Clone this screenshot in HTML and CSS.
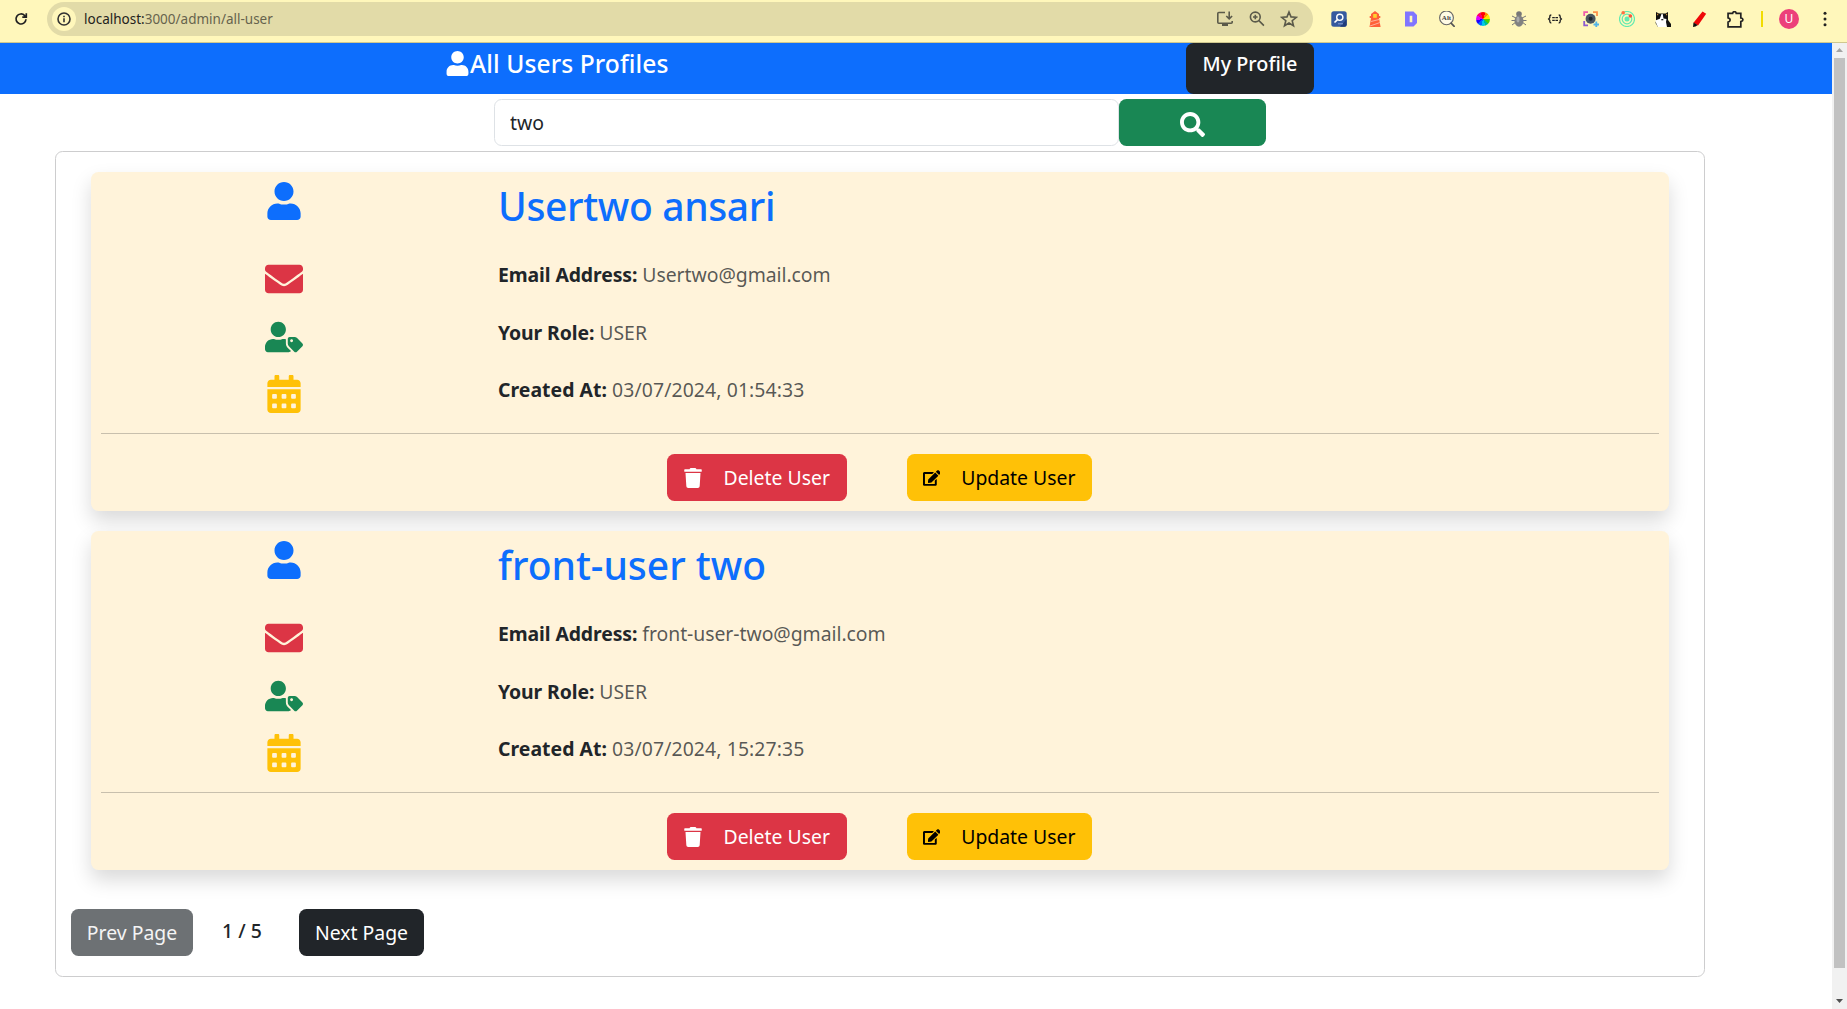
FILE: index.html
```
<!DOCTYPE html>
<html lang="en">
<head>
<meta charset="utf-8">
<title>All Users Profiles</title>
<link rel="stylesheet" href="styles.css">
</head>
<body>
<svg class="defs" width="0" height="0">
  <symbol id="user" viewBox="0 0 448 512"><path d="M224 256c70.7 0 128-57.3 128-128S294.7 0 224 0 96 57.3 96 128s57.3 128 128 128zm89.6 32h-16.7c-22.2 10.2-46.9 16-72.9 16s-50.6-5.8-72.9-16h-16.7C60.2 288 0 348.2 0 422.4V464c0 26.5 21.5 48 48 48h352c26.5 0 48-21.5 48-48v-41.6c0-74.2-60.2-134.4-134.4-134.4z"/></symbol>
  <symbol id="envelope" viewBox="0 0 512 512"><path d="M502.3 190.8c3.9-3.1 9.7-.2 9.7 4.7V400c0 26.5-21.5 48-48 48H48c-26.5 0-48-21.5-48-48V195.6c0-5 5.7-7.8 9.7-4.7 22.4 17.4 52.1 39.5 154.1 113.6 21.1 15.4 56.7 47.8 92.2 47.6 35.7.3 72-32.8 92.3-47.6 102-74.1 131.6-96.3 154-113.7zM256 320c23.2.4 56.6-29.2 73.4-41.4 132.7-96.3 142.8-104.7 173.4-128.7 5.8-4.5 9.2-11.5 9.2-18.9v-19c0-26.5-21.5-48-48-48H48c-26.5 0-48 21.5-48 48v19c0 7.4 3.4 14.3 9.2 18.9 30.6 23.9 40.7 32.4 173.4 128.7 16.8 12.2 50.2 41.8 73.4 41.4z"/></symbol>
  <symbol id="tag" viewBox="0 0 640 512"><path d="M630.6 364.9l-90.3-90.2c-12-12-28.3-18.7-45.3-18.7h-79.3c-17.7 0-32 14.3-32 32v79.2c0 17 6.7 33.2 18.7 45.2l90.3 90.2c12.5 12.5 32.8 12.5 45.3 0l92.5-92.5c12.6-12.5 12.6-32.7.1-45.2zm-182.8-21c-13.3 0-24-10.7-24-24s10.7-24 24-24 24 10.7 24 24c0 13.2-10.7 24-24 24zm-223.8-88c70.7 0 128-57.3 128-128C352 57.3 294.7 0 224 0S96 57.3 96 128c0 70.6 57.3 127.9 128 127.9zm127.8 111.2V294c-12.2-3.6-24.9-6.2-38.2-6.2h-16.7c-22.2 10.2-46.9 16-72.9 16s-50.6-5.8-72.9-16h-16.7C60.2 287.9 0 348.1 0 422.2V464c0 26.5 21.5 48 48 48h351.9c15.5 0 29.1-7.5 37.9-18.9l-57.4-58.1c-18.1-18.1-28.6-42.2-28.6-67.9z"/></symbol>
  <symbol id="calendar" viewBox="0 0 448 512"><path fill-rule="evenodd" d="M400 64h-48V16c0-8.8-7.2-16-16-16h-32c-8.8 0-16 7.2-16 16v48H160V16c0-8.8-7.2-16-16-16h-32c-8.8 0-16 7.2-16 16v48H48C21.5 64 0 85.5 0 112v48h448v-48c0-26.5-21.5-48-48-48zM0 464c0 26.5 21.5 48 48 48h352c26.5 0 48-21.5 48-48V192H0zM76 256h40q12 0 12 12v40q0 12-12 12H76q-12 0-12-12v-40q0-12 12-12zm128 0h40q12 0 12 12v40q0 12-12 12h-40q-12 0-12-12v-40q0-12 12-12zm128 0h40q12 0 12 12v40q0 12-12 12h-40q-12 0-12-12v-40q0-12 12-12zM76 384h40q12 0 12 12v40q0 12-12 12H76q-12 0-12-12v-40q0-12 12-12zm128 0h40q12 0 12 12v40q0 12-12 12h-40q-12 0-12-12v-40q0-12 12-12zm128 0h40q12 0 12 12v40q0 12-12 12h-40q-12 0-12-12v-40q0-12 12-12z"/></symbol>
  <symbol id="trash" viewBox="0 0 448 512"><path d="M432 32H312l-9.4-18.7A24 24 0 0 0 281.1 0H166.8a23.72 23.72 0 0 0-21.4 13.3L136 32H16A16 16 0 0 0 0 48v32a16 16 0 0 0 16 16h416a16 16 0 0 0 16-16V48a16 16 0 0 0-16-16zM53.2 467a48 48 0 0 0 47.9 45h245.8a48 48 0 0 0 47.9-45L416 128H32z"/></symbol>
  <symbol id="edit" viewBox="0 0 576 512"><path d="M402.6 83.2l90.2 90.2c3.8 3.8 3.8 10 0 13.8L274.4 405.6l-92.8 10.3c-12.4 1.4-22.9-9.1-21.5-21.5l10.3-92.8L388.8 83.2c3.8-3.8 10-3.8 13.8 0zm162-22.9l-48.8-48.8c-15.2-15.2-39.9-15.2-55.2 0l-35.4 35.4c-3.8 3.8-3.8 10 0 13.8l90.2 90.2c3.8 3.8 10 3.8 13.8 0l35.4-35.4c15.2-15.3 15.2-40 0-55.2zM384 346.2V448H64V128h229.8c3.2 0 6.2-1.3 8.5-3.5l40-40c7.6-7.6 2.1-20.5-8.5-20.5H48C21.5 64 0 85.5 0 112v352c0 26.5 21.5 48 48 48h352c26.5 0 48-21.5 48-48V306.2c0-10.7-12.9-16-20.5-8.5l-40 40c-2.2 2.3-3.5 5.3-3.5 8.5z"/></symbol>
  <symbol id="search" viewBox="0 0 512 512"><path d="M505 442.7L405.3 343c-4.5-4.5-10.6-7-17-7H372c27.6-35.3 44-79.7 44-128C416 93.1 322.9 0 208 0S0 93.1 0 208s93.1 208 208 208c48.3 0 92.7-16.4 128-44v16.3c0 6.4 2.5 12.5 7 17l99.7 99.7c9.4 9.4 24.6 9.4 33.9 0l28.3-28.3c9.4-9.4 9.4-24.6.1-34zM208 336c-70.7 0-128-57.2-128-128 0-70.7 57.2-128 128-128 70.7 0 128 57.2 128 128 0 70.7-57.2 128-128 128z"/></symbol>
</svg>

<div class="toolbar">
  <svg class="reload" viewBox="0 0 16 16"><path d="M13 8.300A5 5 0 1 1 11.700 4.600L13.300 6.200M13.300 2.200v4h-4" fill="none" stroke="#222" stroke-width="1.700"/></svg>
  <div class="address">
    <span class="info"><svg viewBox="0 0 16 16"><circle cx="8" cy="8" r="6" fill="none" stroke="#333" stroke-width="1.600"/><path d="M7.200 7.200h1.600v4H7.200zM7.200 4.700h1.600v1.600H7.200z" fill="#333"/></svg></span>
    <span class="url">localhost:<span class="path">3000/admin/all-user</span></span>
    <span class="address-icons">
      <svg viewBox="0 0 18 18"><path d="M9 2.500H2.800q-1 0-1 1v8.700q0 1 1 1h12.400q1 0 1-1V11M13.200 1.500v7M10.300 6l2.900 2.900L16.100 6" fill="none" stroke="#5b5a4a" stroke-width="1.600"/><path d="M6 13h6v3H6z" fill="#5b5a4a"/></svg>
      <svg viewBox="0 0 18 18"><circle cx="7.300" cy="7" r="4.900" fill="none" stroke="#5b5a4a" stroke-width="1.600"/><path d="M10.900 10.600l5 5M7.300 4.700v4.600M5 7h4.600" fill="none" stroke="#5b5a4a" stroke-width="1.600"/></svg>
      <svg viewBox="0 0 18 18"><path d="M9 2l2 4.900 5.300.4-4.100 3.400 1.300 5.100L9 13l-4.500 2.800 1.300-5.100L1.700 7.300 7 6.900z" fill="none" stroke="#5b5a4a" stroke-width="1.600"/></svg>
    </span>
  </div>
  <div class="extensions">
    <svg viewBox="0 0 16 16"><rect x=".3" y=".3" width="15.400" height="15.400" rx="2.500" fill="#35599f"/><path d="M9 15.700h4.500q2.200 0 2.200-2.200V8z" fill="#203c7a"/><circle cx="8.800" cy="6.300" r="3.100" fill="none" stroke="#fff" stroke-width="1.400"/><path d="M6.500 8.700L3.500 11.500" stroke="#fff" stroke-width="1.700"/><path d="M7 12.800h5" stroke="#9fb3df" stroke-width=".8"/></svg>
    <svg viewBox="0 0 16 16"><path d="M8 0l4 3v2h1.300v2H12l1.600 9H2.500L4 7H2.700V5H4V3z" fill="#ff6038"/><rect x="6.200" y="3" width="3.600" height="3.800" fill="#ffd22e"/><path d="M4 10.500L12 8.500M3 15l10-3.500" stroke="#ffb09b" stroke-width="1"/></svg>
    <svg viewBox="0 0 16 16"><path fill-rule="evenodd" d="M2 .5h8.500L14 4v8l-3.500 3.500H2zM6.700 4.700v6.600h2.600V4.700z" fill="#8075ff"/></svg>
    <svg viewBox="0 0 16 16"><circle cx="7.500" cy="6.800" r="6.900" fill="#fffbe5" stroke="#666" stroke-width="1.100"/><path d="M11.600 11.600l4.100 4.300" stroke="#555" stroke-width="1.700"/><text x="7.500" y="8.900" text-anchor="middle" class="alt-text">Alt</text></svg>
    <span class="wheel"></span>
    <svg viewBox="0 0 16 16"><path d="M1 5l4 2M15 5l-4 2M.5 9.500H15.500M1 14l4-3M15 14l-4-3" stroke="#777" fill="none"/><circle cx="8" cy="3" r="2.800" fill="#777"/><ellipse cx="8" cy="10" rx="4.500" ry="5.800" fill="#818181"/><ellipse cx="7" cy="8.500" rx="1.500" ry="3" fill="#aaa"/></svg>
    <svg viewBox="0 0 16 16"><path d="M4.300 4q-1.500 0-1.500 1.400v1.400L1.600 8l1.200 1.200v1.400q0 1.400 1.500 1.400M11.700 4q1.500 0 1.500 1.400v1.400L14.400 8l-1.200 1.200v1.400q0 1.400-1.500 1.400M5.200 6.700h2.600M8.400 6.700H11M5.200 9.300h2.600M8.400 9.300H11" fill="none" stroke="#222" stroke-width="1.300"/></svg>
    <svg viewBox="0 0 16 16"><path d="M1.200 5V1.200H5" stroke="#f05bab" fill="none" stroke-width="1.800"/><path d="M10 1.200h4V5" stroke="#ff914a" fill="none" stroke-width="1.800"/><path d="M1.200 10v4.300H5" stroke="#8d5bd0" fill="none" stroke-width="1.800"/><path d="M13.300 10.500V16M10.500 13.500H16" stroke="#51b4e8" fill="none" stroke-width="1.800"/><circle cx="7.600" cy="7.700" r="5" fill="#4a5560"/><circle cx="7.600" cy="7.700" r="2" fill="#1c252e"/></svg>
    <svg viewBox="0 0 16 16"><g fill="none" stroke="#61eab0" stroke-width="1.200"><circle cx="8" cy="8" r="7.500"/><circle cx="8" cy="8" r="4.800"/></g><circle cx="8" cy="8" r="2.500" fill="#61eab0"/><circle cx="4.200" cy="1.800" r="1.800" fill="#ff7042"/><circle cx="11.300" cy="5" r="1.800" fill="#ff5038"/></svg>
    <svg viewBox="0 0 16 16"><path d="M1 10V1l3 1.500h6.500L13 1v8l3 4v3H3L.5 12z" fill="#111"/><path d="M6.500 3h1.200l.8 4.500 3 .5-.5 3 1 5H3l-1.500-3L.3 9.500l4.500-1.700z" fill="#fff"/><path d="M2 2.800h1.200v1.400H2zM11 2.800h1.200v1.400H11z" fill="#c88b36"/><path d="M6.300 8h2v1.300h-2z" fill="#222"/></svg>
    <svg viewBox="0 0 16 16"><path d="M11.500.5l3.700 2.300L7 14.500 2.500 11.700z" fill="#ef0808"/><path d="M2.500 11.500L6.700 14l-2.200 1.500L2 16z" fill="#111"/></svg>
    <svg class="puzzle" viewBox="0 0 16 16"><path d="M1 2.300h4.300q.3-1.700 1.700-1.700t1.700 1.700H13v4.200q2 .3 2 1.700t-2 1.700V15H1v-4.500q2-.5 2-2T1 6.500z" fill="none" stroke="#222" stroke-width="1.600"/></svg>
    <span class="divider"></span>
    <span class="avatar">U</span>
    <svg viewBox="0 0 16 16"><g fill="#222"><circle cx="8" cy="2.300" r="1.500"/><circle cx="8" cy="8" r="1.500"/><circle cx="8" cy="13.700" r="1.500"/></g></svg>
  </div>
</div>

<div class="viewport">
  <main class="page">
    <nav class="navbar">
      <h5 class="brand"><svg><use href="#user"/></svg>All Users Profiles</h5>
      <a class="profile">My Profile</a>
    </nav>
    <form class="search">
      <input class="search-input" type="text" value="two">
      <button class="search-button" type="button"><svg><use href="#search"/></svg></button>
    </form>
    <section class="panel">
      <article class="card">
        <div class="details">
          <svg class="icon blue"><use href="#user"/></svg><h1 class="tight">Usertwo ansari</h1>
          <svg class="icon red"><use href="#envelope"/></svg><p><b>Email Address:</b> <span class="email">Usertwo@gmail.com</span></p>
          <svg class="icon green"><use href="#tag"/></svg><p><b>Your Role:</b> <span>USER</span></p>
          <svg class="icon yellow"><use href="#calendar"/></svg><p><b class="created">Created At:</b> <span class="date">03/07/2024, 01:54:33</span></p>
        </div>
        <div class="actions">
          <button class="btn delete" type="button"><svg><use href="#trash"/></svg>Delete User</button>
          <button class="btn update" type="button"><svg><use href="#edit"/></svg>Update User</button>
        </div>
      </article>
      <article class="card">
        <div class="details">
          <svg class="icon blue"><use href="#user"/></svg><h1>front-user two</h1>
          <svg class="icon red"><use href="#envelope"/></svg><p><b>Email Address:</b> <span class="email">front-user-two@gmail.com</span></p>
          <svg class="icon green"><use href="#tag"/></svg><p><b>Your Role:</b> <span>USER</span></p>
          <svg class="icon yellow"><use href="#calendar"/></svg><p><b class="created">Created At:</b> <span class="date">03/07/2024, 15:27:35</span></p>
        </div>
        <div class="actions">
          <button class="btn delete" type="button"><svg><use href="#trash"/></svg>Delete User</button>
          <button class="btn update" type="button"><svg><use href="#edit"/></svg>Update User</button>
        </div>
      </article>
      <div class="pager">
        <button class="btn prev" type="button">Prev Page</button>
        <span class="count">1 / 5</span>
        <button class="btn next" type="button">Next Page</button>
      </div>
    </section>
  </main>
  <div class="scrollbar">
    <svg viewBox="0 0 15 10"><path d="M4 7h7L7.500 3z" fill="#a3a3a3"/></svg>
    <div class="thumb"></div>
    <svg class="down" viewBox="0 0 15 10"><path d="M4 3h7L7.500 7z" fill="#505050"/></svg>
  </div>
</div>
</body>
</html>
```
FILE: styles.css
```
* { box-sizing: border-box; }
body { margin: 0; height: 1009px; overflow: hidden; display: flex; flex-direction: column; background: #fff; color: #212529; font: 19.4px/30px "Noto Sans", sans-serif; }
h1, h5, p { margin: 0; }
button, input { font: inherit; }
.defs { position: absolute; }

.toolbar { display: flex; align-items: flex-start; flex: none; height: 43px; padding-top: 2px; background: #fff7bb; border-bottom: 1px solid #cfc88f; }
.reload { width: 16px; height: 16px; margin: 9px 18px 0 13px; }
.address { display: flex; align-items: center; width: 1266px; height: 34px; padding-left: 5px; background: #e2dba8; border-radius: 17px; }
.info { display: flex; align-items: center; justify-content: center; width: 24px; height: 24px; border-radius: 50%; background: #fff7bb; }
.info svg { width: 16px; height: 16px; }
.url { margin-left: 8px; font-size: 13.5px; line-height: 34px; color: #22221c; }
.path { color: #66634d; }
.address-icons { display: flex; gap: 14px; margin: 0 15px 0 auto; }
.address-icons svg { width: 18px; height: 18px; }
.extensions { display: flex; align-items: center; height: 34px; margin-left: 18px; gap: 20px; }
.extensions svg { width: 16px; height: 16px; flex: none; }
.extensions .puzzle { width: 17px; height: 17px; margin-right: -1px; }
.alt-text { font: bold 7px "Liberation Serif", serif; fill: #444; }
.wheel { width: 14px; height: 14px; margin: 0 1px; border-radius: 50%; background: conic-gradient(from -20deg, red 0 40deg, #ff8a00 40deg 70deg, #ffe600 70deg 110deg, #4fd000 110deg 150deg, #00c08a 150deg 180deg, #00c8e8 180deg 215deg, #06f 215deg 250deg, #20f 250deg 280deg, #d0f 280deg 320deg, #f06 320deg); }
.divider { width: 2px; height: 16px; margin: 0 -2px; background: #f2dc00; }
.avatar { width: 20px; height: 20px; margin: 0 -2px; border-radius: 50%; background: #ec407a; color: #fff; font-size: 12px; line-height: 20px; text-align: center; }

.viewport { display: flex; flex: 1; min-height: 0; }
.page { flex: 1; }
.navbar { display: flex; justify-content: space-between; height: 51px; padding: 0 518px 0 446px; background: #0d6efd; color: #fff; }
.brand { display: flex; align-items: flex-start; font-size: 24.6px; font-weight: 550; line-height: 30px; letter-spacing: .1px; padding-top: 6px; }
.brand svg { width: 23px; height: 25px; margin-top: 2px; margin-right: 1px; fill: #fff; }
.profile { width: 128px; height: 51px; padding-top: 6px; border-radius: 7.5px; background: #212529; font-size: 19.8px; font-weight: 550; line-height: 30px; text-align: center; }
.search { display: flex; height: 57px; padding: 5px 0 5px 494px; }
.search-input { width: 625px; height: 47px; padding: 0 15px; border: 1px solid #dee2e6; border-radius: 7.5px; color: #212529; }
.search-button { display: flex; align-items: center; justify-content: center; width: 147px; height: 47px; padding: 3px 0 0; border: 0; border-radius: 7.5px; background: #198754; }
.search-button svg { width: 25px; height: 25px; fill: #fff; }

.panel { width: 1650px; height: 826px; margin-left: 55px; padding: 20px 35px 0 15px; border: 1px solid #cdcdce; border-radius: 7.5px; }
.card { margin: 0 0 20px 20px; padding: 10px; border-radius: 7.5px; background: #fff3da; box-shadow: 0 10px 20px rgba(0, 0, 0, .15); }
.details { display: grid; grid-template-columns: 366px 1fr; column-gap: 31px; grid-template-rows: 77.500px 58px 57.500px 58px; border-bottom: 1px solid #c8bfad; }
.icon { width: 38px; height: 38px; justify-self: center; }
.blue { fill: #0d6efd; }
.red { fill: #dc3545; }
.green { fill: #198754; }
.yellow { fill: #ffc107; }
h1 { color: #0d6efd; font-size: 39px; font-weight: 500; line-height: 47px; letter-spacing: 0; }
h1.tight { letter-spacing: -.35px; }
p span { color: rgba(33, 37, 41, .75); }
p b { letter-spacing: -.1px; }
p .created { letter-spacing: .05px; }
.email { letter-spacing: -.05px; }
.date { letter-spacing: .1px; }
.actions { display: flex; justify-content: center; gap: 60px; padding: 20px 2px 0 0; }
.btn { display: flex; align-items: center; height: 47px; padding: 0 16px; border: 0; border-radius: 7.5px; white-space: nowrap; }
.btn svg { width: 20px; height: 20px; margin-right: 21px; }
.delete { width: 180px; background: #dc3545; color: #fff; fill: #fff; }
.update { width: 185px; background: #ffc107; color: #000; fill: #000; }
.pager { display: flex; margin-top: 39px; }
.prev { width: 122px; justify-content: center; padding: 0; background: #6d7174; color: #f4f4f4; }
.count { width: 106px; padding: 7px 0 0 29px; font-weight: 550; }
.next { width: 125px; justify-content: center; padding: 0; background: #212529; color: #fff; }

.scrollbar { display: flex; flex-direction: column; width: 15px; background: #f1f1f1; }
.scrollbar svg { width: 15px; height: 10px; margin: 2px 0 3px; }
.thumb { width: 11px; height: 910px; margin-left: 2px; background: #c1c1c1; }
.scrollbar .down { margin: auto 0 3px; }
```
